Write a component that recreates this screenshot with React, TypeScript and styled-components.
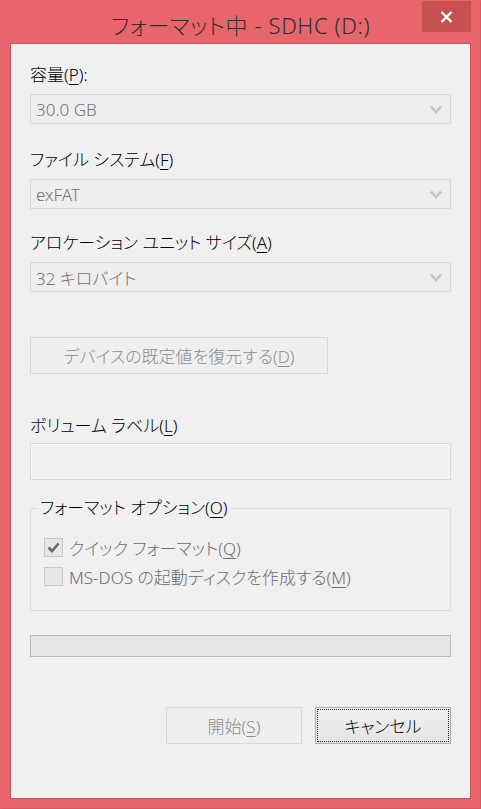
import * as React from "react";
import styled, { createGlobalStyle } from "styled-components";

const GlobalStyle = createGlobalStyle`
  html, body {
    margin: 0;
    padding: 0;
    background: #e8666b;
  }
  body {
    font-family: "Noto Sans", "Noto Sans CJK JP", sans-serif;
    font-feature-settings: "palt";
    font-weight: 300;
  }
`;

const Window = styled.div`
  width: 481px;
  height: 809px;
  box-sizing: border-box;
  background: #e8666b;
  border: 1px solid #d95a60;
  border-top-color: #e8666b;
  border-left-color: #e8666b;
  padding: 42px 9px 9px 9px;
  display: flex;
  flex-direction: column;
  position: relative;
`;

const TitleBar = styled.div`
  position: absolute;
  top: 0;
  left: 0;
  right: 0;
  height: 43px;
  display: flex;
  align-items: center;
  justify-content: center;
`;

const Title = styled.div`
  font-size: 22px;
  color: #2e2e2e;
  letter-spacing: 0.6px;
  margin-top: 2px;
`;

const CloseButton = styled.div`
  position: absolute;
  top: 0;
  right: 9px;
  width: 49px;
  height: 31px;
  background: #c75050;
  display: flex;
  align-items: center;
  justify-content: center;
`;

const Client = styled.div`
  flex: 1;
  background: #f0f0f0;
  border: 1px solid #c9555b;
  padding: 21px 19px 0 19px;
  display: flex;
  flex-direction: column;
`;

const Label = styled.div<{ $gap?: number }>`
  font-size: 17px;
  line-height: 20px;
  color: #000;
  margin-top: ${(p) => p.$gap ?? 0}px;
  white-space: nowrap;
`;

const Key = styled.u`
  text-decoration: underline;
  text-underline-offset: 3px;
  text-decoration-thickness: 1px;
`;

const Combo = styled.div`
  height: 30px;
  box-sizing: border-box;
  margin-top: 9px;
  border: 1px solid #d9d9d9;
  background: #efefef;
  display: flex;
  align-items: center;
  justify-content: space-between;
  padding: 0 8px 0 5px;
  font-size: 17px;
  color: #727272;
`;

const Chevron = () => (
  <svg width="12" height="9" viewBox="0 0 12 9">
    <polyline points="1,1.5 6,7 11,1.5" fill="none" stroke="#c4c4c4" strokeWidth="2.6" />
  </svg>
);

const Button = styled.div<{ $width: number; $focus?: boolean; $disabled?: boolean }>`
  position: relative;
  width: ${(p) => p.$width}px;
  height: 37px;
  box-sizing: border-box;
  border: 1px solid ${(p) => (p.$disabled ? "#d9d9d9" : "#adadad")};
  background: ${(p) =>
    p.$disabled ? "#efefef" : "linear-gradient(to bottom, #f0f0f0, #e5e5e5)"};
  color: ${(p) => (p.$disabled ? "#8c8c8c" : "#000")};
  font-size: 17px;
  display: flex;
  align-items: center;
  justify-content: center;
  white-space: nowrap;

  &::after {
    content: "";
    display: ${(p) => (p.$focus ? "block" : "none")};
    position: absolute;
    inset: 1px;
    border: 1px dotted #222;
  }
`;

const TextBox = styled.div`
  height: 37px;
  box-sizing: border-box;
  margin-top: 7px;
  border: 1px solid #dadada;
  box-shadow: inset 0 0 0 1px #f7f7f7;
  background: #f0f0f0;
`;

const Group = styled.fieldset`
  margin: 18px 0 0 0;
  padding: 19px 13px 0 13px;
  border: 1px solid #dcdcdc;
  height: 113px;
  box-sizing: border-box;
  display: flex;
  flex-direction: column;
  gap: 9px;
`;

const Legend = styled.legend`
  font-size: 17px;
  color: #000;
  padding: 0 2px;
  margin-left: -6px;
  line-height: 20px;
`;

const CheckRow = styled.div`
  display: flex;
  align-items: center;
  gap: 6px;
  font-size: 17px;
  color: #6d6d6d;
  height: 20px;
  white-space: nowrap;
`;

const Box = styled.div`
  width: 19px;
  height: 19px;
  box-sizing: border-box;
  border: 1px solid #c8c8c8;
  background: #e6e6e6;
  display: flex;
  align-items: center;
  justify-content: center;
`;

const Progress = styled.div`
  height: 22px;
  box-sizing: border-box;
  margin-top: 24px;
  border: 1px solid #bcbcbc;
  background: #e6e6e6;
`;

const ButtonRow = styled.div`
  margin-top: 50px;
  display: flex;
  justify-content: flex-end;
  gap: 13px;
`;

const App: React.FC = () => {
  return (
    <>
      <GlobalStyle />
      <Window>
        <TitleBar>
          <Title>フォーマット中 - SDHC (D:)</Title>
          <CloseButton>
            <svg width="13" height="12" viewBox="0 0 13 12">
              <path d="M1.5 1 L11.5 11 M11.5 1 L1.5 11" stroke="#fff" strokeWidth="2.4" />
            </svg>
          </CloseButton>
        </TitleBar>
        <Client>
          <Label>
            容量(<Key>P</Key>):
          </Label>
          <Combo>
            <span>30.0 GB</span>
            <Chevron />
          </Combo>

          <Label $gap={26}>
            ファイル システム(<Key>F</Key>)
          </Label>
          <Combo>
            <span>exFAT</span>
            <Chevron />
          </Combo>

          <Label $gap={24}>
            アロケーション ユニット サイズ(<Key>A</Key>)
          </Label>
          <Combo>
            <span>32 キロバイト</span>
            <Chevron />
          </Combo>

          <Button $width={298} $disabled style={{ marginTop: 45 }}>
            <span>
              デバイスの既定値を復元する(<Key>D</Key>)
            </span>
          </Button>

          <Label $gap={42}>
            ボリューム ラベル(<Key>L</Key>)
          </Label>
          <TextBox />

          <Group>
            <Legend>
              フォーマット オプション(<Key>O</Key>)
            </Legend>
            <CheckRow>
              <Box>
                <svg width="13" height="11" viewBox="0 0 13 11">
                  <polyline points="1.5,5.5 5,9 11.5,1.5" fill="none" stroke="#6a6a6a" strokeWidth="2.6" />
                </svg>
              </Box>
              <span>
                クイック フォーマット(<Key>Q</Key>)
              </span>
            </CheckRow>
            <CheckRow>
              <Box />
              <span>
                MS-DOS の起動ディスクを作成する(<Key>M</Key>)
              </span>
            </CheckRow>
          </Group>

          <Progress />

          <ButtonRow>
            <Button $width={136} $disabled>
              <span>
                開始(<Key>S</Key>)
              </span>
            </Button>
            <Button $width={136} $focus>
              キャンセル
            </Button>
          </ButtonRow>
        </Client>
      </Window>
    </>
  );
};

export default App;
